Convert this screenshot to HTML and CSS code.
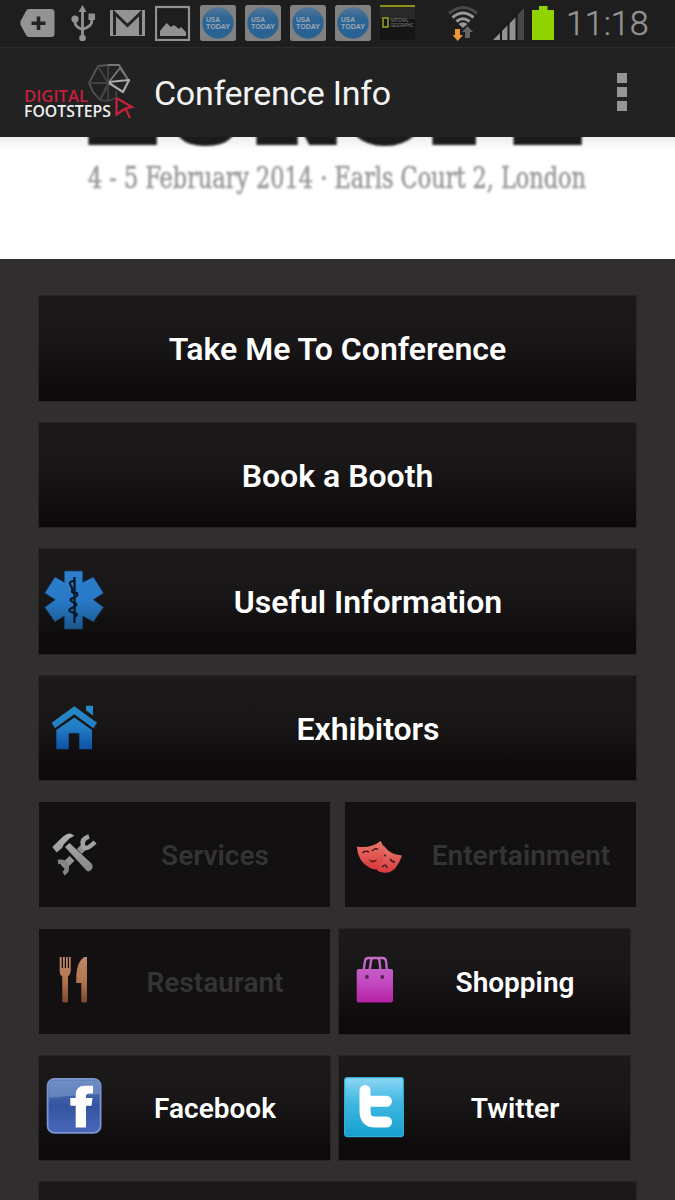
FILE: index.html
```html
<!DOCTYPE html>
<html lang="en">
<head>
<meta charset="utf-8">
<title>Conference Info</title>
<link rel="stylesheet" href="styles.css">
</head>
<body>
<svg class="defs" width="0" height="0" aria-hidden="true">
  <defs>
    <linearGradient id="star" x1="0" y1="0" x2="0" y2="1"><stop offset="0" stop-color="#2d7ecb"/><stop offset=".5" stop-color="#287ac8"/><stop offset="1" stop-color="#1a588f"/></linearGradient>
    <linearGradient id="house" gradientUnits="userSpaceOnUse" x1="0" y1="7" x2="0" y2="52"><stop offset="0" stop-color="#278bc6"/><stop offset=".5" stop-color="#237dc4"/><stop offset="1" stop-color="#0c4fa5"/></linearGradient>
    <linearGradient id="steel" gradientUnits="userSpaceOnUse" x1="0" y1="8" x2="0" y2="50"><stop offset="0" stop-color="#b4b3b4"/><stop offset="1" stop-color="#828182"/></linearGradient>
    <linearGradient id="copper" gradientUnits="userSpaceOnUse" x1="0" y1="6" x2="0" y2="52"><stop offset="0" stop-color="#bd8768"/><stop offset=".5" stop-color="#b47750"/><stop offset="1" stop-color="#7d4830"/></linearGradient>
    <linearGradient id="mask" x1="0" y1="0" x2="0" y2="1"><stop offset="0" stop-color="#e7796e"/><stop offset="1" stop-color="#d9383b"/></linearGradient>
    <linearGradient id="bag" gradientUnits="userSpaceOnUse" x1="0" y1="6" x2="0" y2="52"><stop offset="0" stop-color="#c26dc8"/><stop offset=".5" stop-color="#c44fc2"/><stop offset="1" stop-color="#b51fa5"/></linearGradient>
    <linearGradient id="fb" x1="0" y1="0" x2="0" y2="1"><stop offset="0" stop-color="#5a7cba"/><stop offset=".5" stop-color="#3454a0"/><stop offset="1" stop-color="#4968bd"/></linearGradient>
    <linearGradient id="tw" x1="0" y1="0" x2="0" y2="1"><stop offset="0" stop-color="#8ed6f5"/><stop offset=".4" stop-color="#42b9e2"/><stop offset="1" stop-color="#169fcd"/></linearGradient>
    <linearGradient id="usa" x1="0" y1="0" x2="0" y2="1"><stop offset="0" stop-color="#54789b"/><stop offset=".35" stop-color="#2d6595"/><stop offset="1" stop-color="#286292"/></linearGradient>
    <symbol id="usatoday" viewBox="0 0 36 36">
      <rect width="36" height="36" rx="2.5" fill="#818181"/>
      <circle cx="18" cy="18" r="15.7" fill="url(#usa)"/>
      <g class="usa-text"><text x="6" y="17" textLength="14" lengthAdjust="spacingAndGlyphs">USA</text><text x="6" y="23.5" textLength="24" lengthAdjust="spacingAndGlyphs">TODAY</text></g>
    </symbol>
  </defs>
</svg>

<header class="status">
  <div class="notifications">
    <svg viewBox="0 0 36 36"><path d="M9 4H31Q34.500 4 34.500 7V29Q34.500 32 31 32H9Q7 32 6 30L.6 20Q0 18 .6 16L6 6Q7 4 9 4Z" fill="#939393"/><path d="M18.500 11.500V25M11.500 18.200H25.500" stroke="#222" stroke-width="3.600"/></svg>
    <svg viewBox="0 0 36 36" fill="#929292"><path d="M17.500 0 21.500 7H13.500ZM23.500 8.500h6.500V15H23.500Z"/><circle cx="10" cy="14" r="3.600"/><circle cx="17.500" cy="33" r="3.300"/><path d="M17.500 5V32M10 14V17Q10 22 17.500 24.500M26.700 14V17Q26.700 21 17.500 24.500" fill="none" stroke="#929292" stroke-width="2.800"/></svg>
    <svg viewBox="0 0 36 36"><path d="M0 5H35V31H0Z" fill="#939393"/><path d="M4.500 30V8L17.500 20.500 30.500 8V30" fill="none" stroke="#242424" stroke-width="3"/></svg>
    <svg viewBox="0 0 36 36"><rect x="1" y="2" width="33" height="33" fill="none" stroke="#939393" stroke-width="2.200"/><path d="M5 31V26L11.500 18 16 22 19 20 24 24 26 22 31 27V31Z" fill="#929292"/></svg>
    <svg><use href="#usatoday"/></svg>
    <svg><use href="#usatoday"/></svg>
    <svg><use href="#usatoday"/></svg>
    <svg><use href="#usatoday"/></svg>
    <svg viewBox="0 0 36 36"><path d="M0 1H35V35H0Z" fill="#151515"/><path d="M0 1H35V14H0Z" fill="#292929"/><path d="M0 0H35V2H0Z" fill="#899012"/><rect x="3" y="13" width="5" height="9" fill="none" stroke="#9ba31d" stroke-width="1.500"/><g class="geo-text"><text x="10.500" y="16.500" textLength="18" lengthAdjust="spacingAndGlyphs">NATIONAL</text><text x="10.500" y="21.500" textLength="23" lengthAdjust="spacingAndGlyphs">GEOGRAPHIC</text></g></svg>
  </div>
  <div class="system">
    <svg class="wifi" viewBox="0 0 30 36"><g fill="none" stroke-width="3"><path d="M1 8.500Q15-3.500 29 8.500" stroke="#484848"/><path d="M4.500 12.500Q15 3.500 25.500 12.500" stroke="#999"/><path d="M8.500 16.500Q15 11 21.500 16.500" stroke="#999"/></g><path d="M10.500 19Q15 15.500 19.500 19L15 23Z" fill="#999"/><path d="M7 24h5v6h3L9.700 36 4.500 30H7Z" fill="#e99a36"/><path d="M17 33V27H14L19.500 21 25 27H22V33Z" fill="#656565"/></svg>
    <svg class="signal" viewBox="0 0 31 32"><path d="M31 0V31H0Z" fill="#929292"/><path d="M24 7 31 0V31H24Z" fill="#474747"/><path d="M8 20V31M15.500 13V31M23.500 5V31" stroke="#151515" stroke-width="2"/></svg>
    <svg class="battery" viewBox="0 0 22 34"><path d="M7 0h8.500v4H22V34H0V4H7Z" fill="#8fd300"/></svg>
    <span class="clock">11:18</span>
  </div>
</header>

<div class="appbar">
  <svg class="logo" viewBox="0 0 112 60">
    <g fill="none" stroke-width="1.800" stroke-linejoin="round">
      <path d="M85 22 76 39 69 31 65 22 74 5 84 4" stroke="#555"/><path d="M84 4V39M84 22 74 5M84 22 65 22M84 22 76 39 84 40 92 37V30" stroke="#424242"/>
      <path d="M84 4H95L105 20 96 7 85 21" stroke="#777"/><path d="M85 21 105 19 99 31 85 22" stroke="#aaa" stroke-width="2.200"/>
      <path d="M92.500 37 108 46 101.500 47.500 106 57M101.500 47.500 92.500 53.500V37" stroke="#c9223e" stroke-width="2.200" stroke-linejoin="miter"/>
    </g>
    <text class="logo-digital" x="0" y="41" textLength="64" lengthAdjust="spacingAndGlyphs">DIGITAL</text>
    <text class="logo-footsteps" x="0" y="56" textLength="87" lengthAdjust="spacingAndGlyphs">FOOTSTEPS</text>
  </svg>
  <h1 class="title">Conference Info</h1>
  <div class="overflow"><i></i><i></i><i></i></div>
</div>

<section class="banner">
  <svg viewBox="0 0 675 122" width="675" height="122">
    <text class="banner-name" x="87 164 255 344 431 512" y="5">EUROPE</text>
    <text class="banner-date" x="88" y="51" textLength="498" lengthAdjust="spacingAndGlyphs">4 - 5 February 2014 · Earls Court 2, London</text>
  </svg>
</section>

<main class="menu">
  <div class="button">Take Me To Conference</div>
  <div class="button">Book a Booth</div>
  <div class="button with-icon">
    <svg class="icon" viewBox="0 0 60 60"><path d="M20.300 0H38.700V11.300L49.300 6 59.500 22 49.300 28.700 59.500 36.300 49.300 50.700 38.700 45V58H20.300V45L11 50.700.7 36.300 11.300 28.700.7 22 11 6 20.300 11.300Z" fill="url(#star)" stroke="#123e65" stroke-width=".7"/><path d="M30.500 6V52" stroke="#071c2e" stroke-width="2.400"/><path d="M31 10Q24 10 26.500 14T28 20 33 22Q35 25 29 27T31 32Q35 34 28 37T31 42Q35 43 31 46" fill="none" stroke="#071523" stroke-width="2"/></svg>
    <span>Useful Information</span>
  </div>
  <div class="button with-icon">
    <svg class="icon" viewBox="0 0 60 60" fill="url(#house)"><path d="M30.300 8.300 53 24.700 49.300 30.300 30.300 16.300 11 30.300 7.700 24.700ZM42 7.700H49V17.500L42 12.500ZM12.300 32 30.300 19.500 48 32V51.300H35.300V35.300H24.700V51.300H12.300Z"/></svg>
    <span>Exhibitors</span>
  </div>
  <div class="pair spread">
    <div class="button with-icon disabled">
      <svg class="icon" viewBox="0 0 60 60"><path d="M19 42 41 21" stroke="#929192" stroke-width="7"/><g fill="none" stroke="#a3a2a3" stroke-width="4.500"><path d="M45 11.500Q37 14 39 20.500T51 17"/><path d="M14 37Q21 36 22.500 41T19.500 48.500" stroke="#858485"/></g><path d="M22 20 46 44.500" stroke="#111" stroke-width="10"/><path d="M8.300 22 17 13.500Q22 8.500 26 8.500L30.500 10.500 25.500 13.500 20 19 18 23 12.700 27.500ZM21 22 25.500 18 47.500 38.500Q50 42 47 45T41.500 44.500Z" fill="url(#steel)"/></svg>
      <span>Services</span>
    </div>
    <div class="button with-icon disabled">
      <svg class="icon" viewBox="0 0 60 60"><path d="M35 22Q39 29 52 30.500 50 37 45.500 43 40 49 33 47.500 27 47 26 43Z" fill="url(#mask)"/><path d="M6.700 21.500Q20 24 30.700 16 32 20 35 22 35 34 29 42.500 26 46 20 43 8 37 6.700 21.500Z" fill="url(#mask)"/><path d="M12.500 28Q15 25 19 27M22 26Q25 22.500 28 24.500M34 30 36 31M40 34Q42 37 45 37M32 42Q36 38 37 43" stroke="#47191b" stroke-width="1.600" fill="none"/><path d="M18 34Q23 37 27 34 24 41 18 34Z" fill="#5a1c1e"/></svg>
      <span>Entertainment</span>
    </div>
  </div>
  <div class="pair">
    <div class="button with-icon disabled">
      <svg class="icon" viewBox="0 0 60 60" fill="url(#copper)"><path d="M15.700 6H17.700V17H19V6H20.800V17H22V6H23.800V17H25V6H26.700V20Q26.500 24 24 25.500V50Q24 51.500 22.500 51.500H20Q18.300 51.500 18.300 50V25.500Q15.700 24 15.700 20ZM43 6V50Q43 51.500 41.500 51.500H39Q37.300 51.500 37.300 50V32H32.300V24Q33 11 40 6Z"/></svg>
      <span>Restaurant</span>
    </div>
    <div class="button with-icon">
      <svg class="icon" viewBox="0 0 60 60"><path d="M19.500 20 21 10Q21.500 7 24.500 7H38.500Q41.500 7 42 10L43 20M25.500 20 27 10Q27.500 7 29 7M36.500 20 35.500 10Q35 7 33 7" stroke="url(#bag)" stroke-width="2.400" fill="none"/><rect x="12.700" y="18" width="36.300" height="33.500" rx="2" fill="url(#bag)"/><circle cx="23" cy="26" r="1.900" fill="#5b1d59"/><circle cx="38.300" cy="26" r="1.900" fill="#5b1d59"/></svg>
      <span>Shopping</span>
    </div>
  </div>
  <div class="pair">
    <div class="button with-icon">
      <svg class="icon" viewBox="0 0 60 60"><rect x="3.600" y=".9" width="53" height="54" rx="7" fill="url(#fb)" stroke="#7d97ce" stroke-width="1.800"/><path d="M5 20V9Q5 2.500 11 2.500H49Q55.500 2.500 55.500 9V16Q30 17 5 20Z" fill="#8ba6d4" opacity=".45"/><path d="M31.700 49.500V27.800H26.300V20H31.700V17Q31.700 7.800 41 7.800H49V15.500H45Q42 15.500 42 18V20H48.500L47.500 27.800H42V49.500Z" fill="#fff"/></svg>
      <span>Facebook</span>
    </div>
    <div class="button with-icon">
      <svg class="icon" viewBox="0 0 60 60"><rect x=".6" y="-.4" width="58.800" height="59" rx="2.500" fill="url(#tw)" stroke="#35add8" stroke-width="1.200"/><path d="M21 12.500V33Q21 44 31 44H42.500M21 23.300H42.500" fill="none" stroke="#fff" stroke-width="11" stroke-linecap="round"/></svg>
      <span>Twitter</span>
    </div>
  </div>
  <div class="button"></div>
</main>
</body>
</html>
```
FILE: styles.css
```css
* { box-sizing: border-box; }
body {
  margin: 0;
  width: 675px;
  height: 1200px;
  overflow: hidden;
  background: #302e2f;
  color: #fff;
  font-family: Roboto, "Liberation Sans", sans-serif;
}
.defs { display: block; }
svg { flex: none; display: block; }

.status {
  display: flex;
  justify-content: space-between;
  height: 48px;
  padding: 5px 27px 0 20px;
  background: #1e1e1e;
  border-bottom: 1px solid #2b2b2b;
}
.notifications { display: flex; gap: 9px; }
.notifications svg { width: 36px; height: 36px; }
.usa-text { font: 700 7.5px "Liberation Sans", sans-serif; fill: #9fa9b2; }
.geo-text { font: 4.6px "Liberation Sans", sans-serif; fill: #888; }
.system { display: flex; align-items: flex-start; }
.wifi { width: 30px; height: 36px; margin-right: 15px; }
.signal { width: 31px; height: 32px; margin: 4px 8px 0 0; }
.battery { width: 22px; height: 34px; margin: 1px 12px 0 0; }
.clock {
  width: 82px;
  font-size: 34px;
  line-height: 37px;
  font-weight: 300;
  color: #949494;
  white-space: nowrap;
  -webkit-text-stroke: .4px #949494;
}

.appbar {
  display: flex;
  align-items: center;
  height: 89px;
  padding: 0 48px 0 24px;
  background: #222;
}
.logo { width: 112px; height: 60px; margin-top: -3px; }
.logo-digital { font: 600 16.500px "Open Sans", sans-serif; fill: #c41f3b; }
.logo-footsteps { font: 600 16px "Open Sans", sans-serif; fill: #eee; }
.title {
  margin: 0 0 0 18px;
  font-size: 34px;
  line-height: 40px;
  font-weight: 400;
  letter-spacing: -.3px;
  color: #f3f3f3;
  white-space: nowrap;
}
.overflow { display: grid; gap: 4px; margin: -2px 0 0 auto; }
.overflow i { width: 10px; height: 10px; background: #959595; }

.banner {
  height: 122px;
  overflow: hidden;
  background: linear-gradient(#eee, #fff 14px);
}
.banner-name {
  font: 700 94px "DejaVu Serif", serif;
  fill: #1c1a1b;
  stroke: #1c1a1b;
  stroke-width: 6px;
  filter: blur(.9px);
}
.banner-date {
  font: 30px "DejaVu Serif Condensed", "DejaVu Serif", serif;
  fill: #999;
  stroke: #999;
  stroke-width: .6px;
  filter: blur(.8px);
}

.menu {
  display: grid;
  grid-auto-rows: 106.6px;
  gap: 20px;
  height: 941px;
  overflow: hidden;
  padding: 36px 38px 0;
}
.button {
  position: relative;
  display: flex;
  align-items: center;
  justify-content: center;
  padding-top: 2px;
  background: linear-gradient(#1b191a, #181617 45%, #0c0a0b 88%);
  border: 1px solid #262425;
  font-size: 32px;
  font-weight: 600;
  white-space: nowrap;
}
.with-icon { padding-left: 5px; justify-content: flex-start; }
.with-icon span { flex: 1; padding-right: 4px; text-align: center; }
.icon { width: 60px; height: 60px; overflow: visible; margin-top: -2px; }
.pair {
  display: grid;
  grid-template-columns: 293px 293px;
  column-gap: 7px;
}
.spread { column-gap: 13px; }
.pair .button { font-size: 28px; }
.disabled {
  background: #121011;
  border-color: #302e2f;
  color: #353435;
}
```
